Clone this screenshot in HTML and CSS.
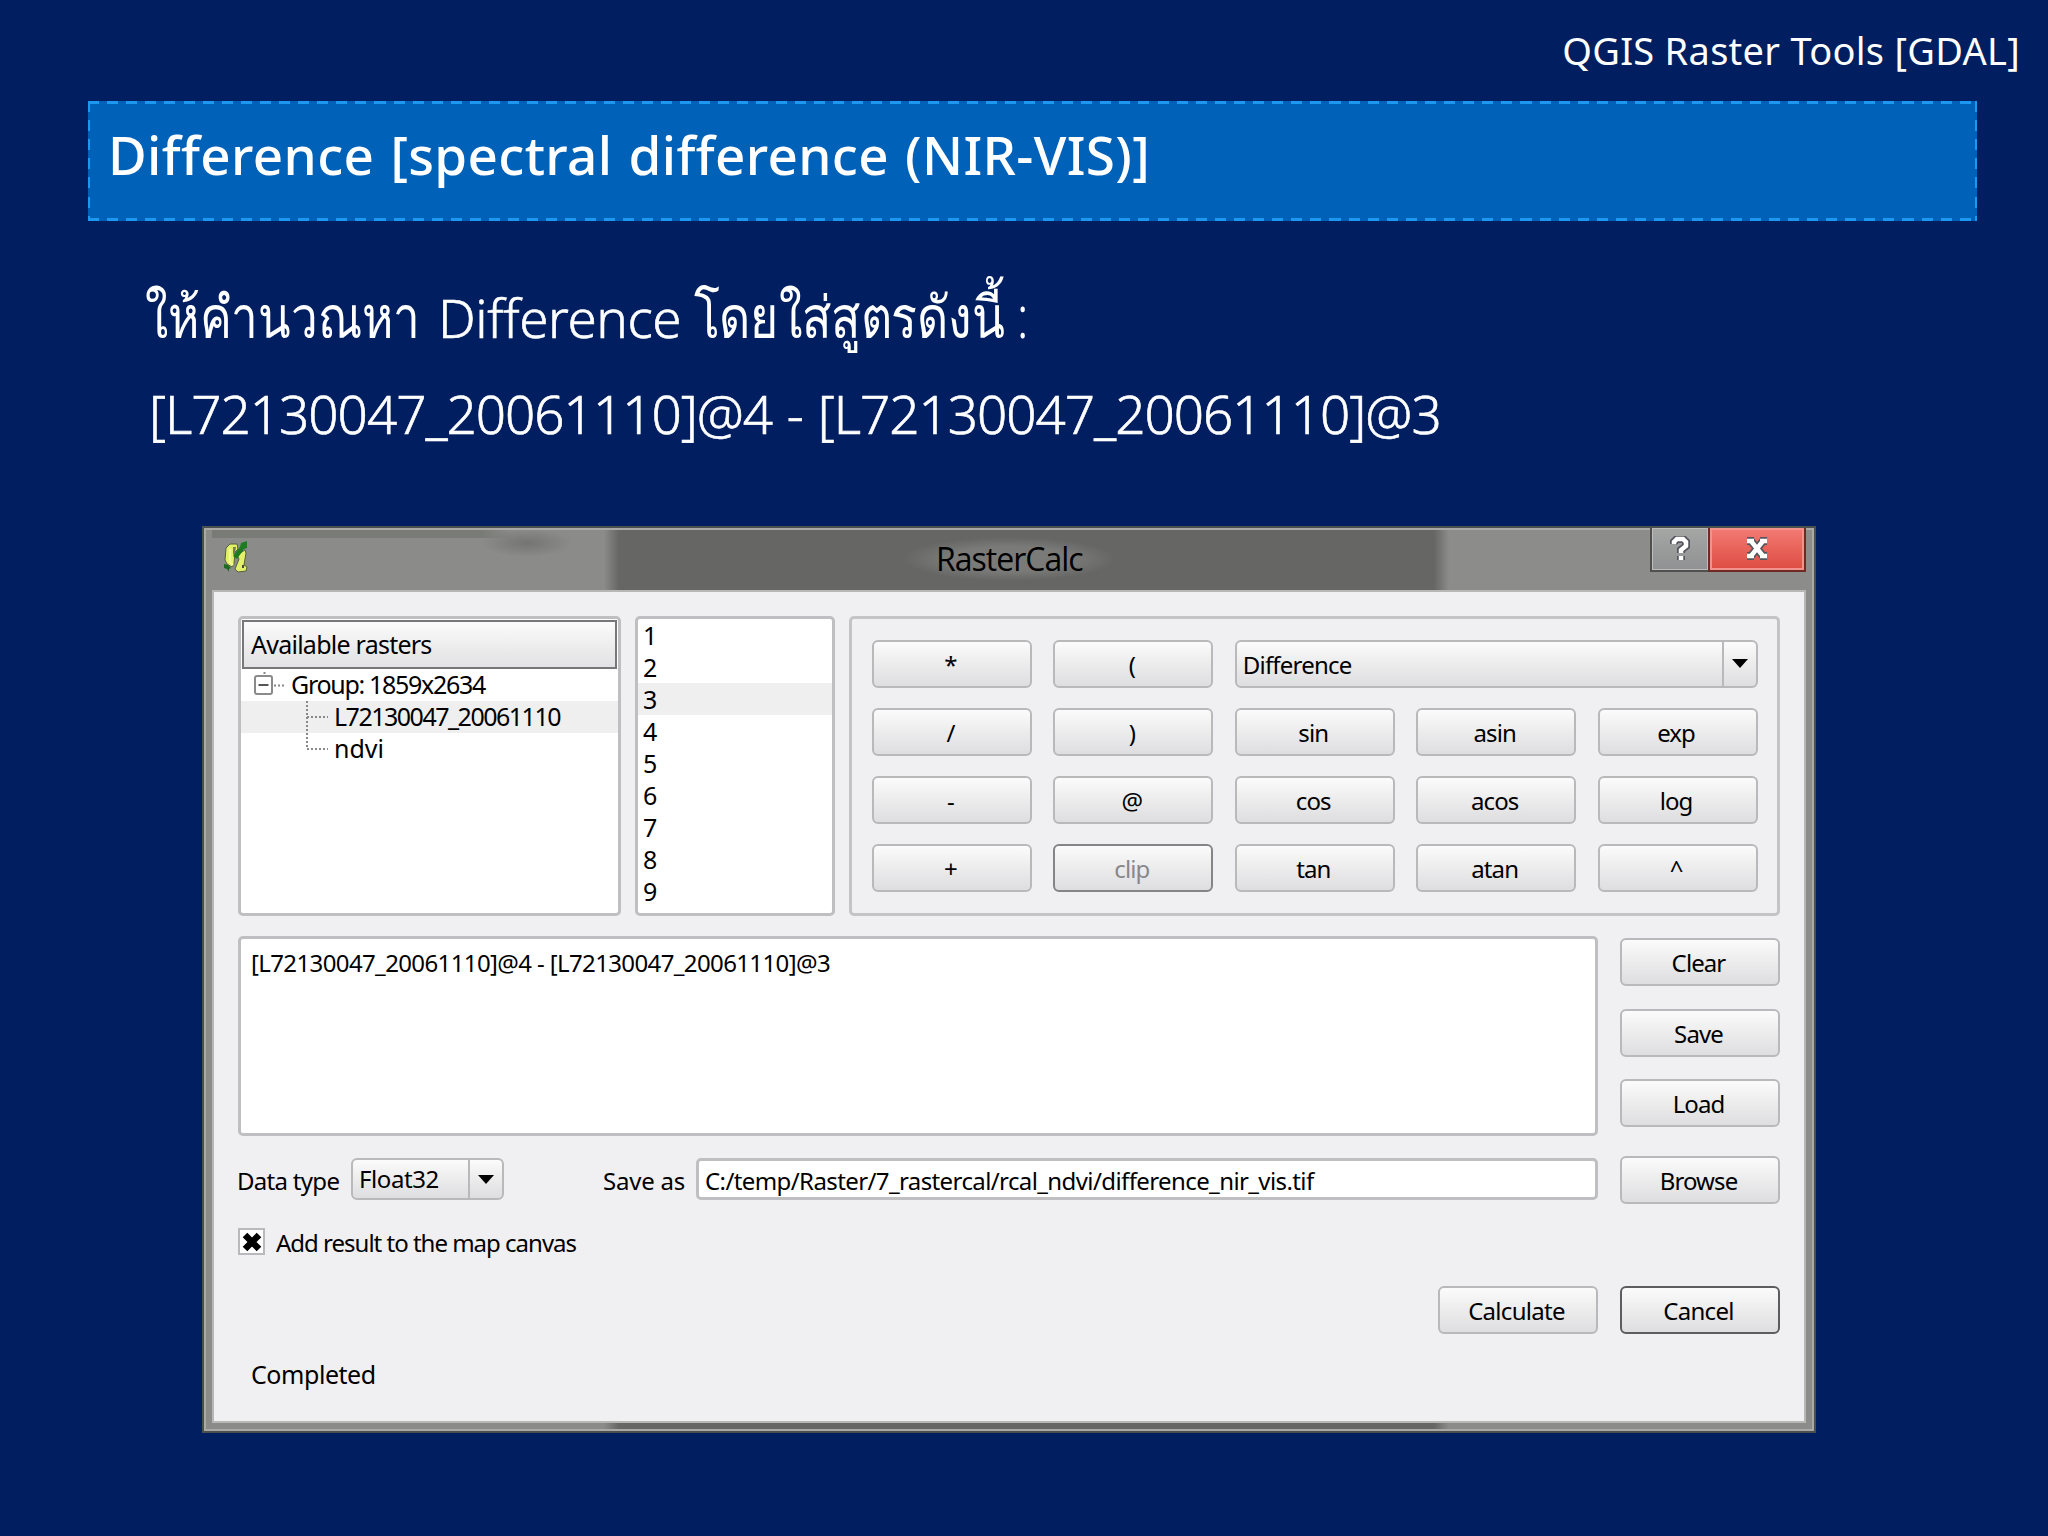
FILE: index.html
```html
<!DOCTYPE html>
<html lang="th">
<head>
    <meta charset="UTF-8">
    <title>QGIS Raster Tools [GDAL]</title>
    <link rel="stylesheet" href="styles.css">
</head>
<body>
    <div class="slide">
        <div class="topic"><span>QGIS Raster Tools [GDAL]</span></div>
        <h1 class="banner"><span>Difference [spectral difference (NIR-VIS)]</span></h1>

        <div class="text">
            <p><span class="thai first">ให้คำนวณหา</span><span class="word">Difference</span><span class="thai">โดยใส่สูตรดังนี้ :</span></p>
            <p><span class="bands-expr">[L72130047_20061110]@4 - [L72130047_20061110]@3</span></p>
        </div>

        <div class="window">
            <div class="titlebar">
                <svg class="logo" viewBox="0 0 24 32" width="24" height="32">
                    <path d="M2 7 6 3h7l1 5-3 3-1 12-2 3-5-3-2-4z" fill="#e3f06a" stroke="#55603a" stroke-width="1"/>
                    <path d="M9 6h3l-1 6-2 2z" fill="#77795a"/>
                    <path d="M6 8v13l3 3" fill="none" stroke="#f4f99b" stroke-width="2"/>
                    <path d="M13 14 21 9l1 3-2 12 3 2-1 4-8 1-3-3 4-10z" fill="#e3f06a" stroke="#55603a" stroke-width="1"/>
                    <path d="M18 24h2v3h-2z" fill="#444b3a"/>
                    <path d="M23 0v7l-3 1-7 10-4-3 7-9 1-4z" fill="#1d7c22"/>
                    <path d="M0 23l4 1 3 3-2 1v3l-2-3-3-1z" fill="#1d6b22"/>
                </svg>
                <div class="title"><span>RasterCalc</span></div>
                <div class="controls">
                    <div class="help">
                        <svg viewBox="0 0 20 26" width="20" height="26">
                            <path d="M4 8V6l3-3h6l3 3v4l-5 4v3M11 20v4" class="outline"/>
                            <path d="M4 8V6l3-3h6l3 3v4l-5 4v3M11 20v4" class="stroke"/>
                        </svg>
                    </div>
                    <div class="close">
                        <svg viewBox="0 0 26 24" width="26" height="24">
                            <path d="M7 4l12 15M19 4L7 19M3 4h7M16 4h7M3 19h7M16 19h7" class="outline"/>
                            <path d="M7 4l12 15M19 4L7 19M3 4h7M16 4h7M3 19h7M16 19h7" class="stroke"/>
                        </svg>
                    </div>
                </div>
            </div>

            <div class="content">
                <div class="top">
                    <div class="rasters">
                        <div class="head"><span>Available rasters</span></div>
                        <div class="node group">
                            <svg width="38" height="32"><path d="M11.500 3v3M21 16.500h10" class="dots"/><rect x="2" y="7" width="17" height="18" rx="2" fill="#fff" stroke="#8a8a8a" stroke-width="2"/><path d="M5.500 16h10" stroke="#555" stroke-width="2"/></svg><span>Group: 1859x2634</span>
                        </div>
                        <div class="node sel"><svg width="28" height="32"><path d="M1 0v32M1 16h21" class="dots"/></svg><span>L72130047_20061110</span></div>
                        <div class="node name"><svg width="28" height="32"><path d="M1 0v16h21" class="dots"/></svg><span>ndvi</span></div>
                    </div>
                    <div class="bands">
                        <div>1</div><div>2</div><div class="sel">3</div><div>4</div><div>5</div><div>6</div><div>7</div><div>8</div><div>9</div>
                    </div>
                    <div class="keys">
                        <div class="btn">*</div><div class="btn">(</div>
                        <div class="combo wide"><span>Difference</span><i></i></div>
                        <div class="btn">/</div><div class="btn">)</div><div class="btn">sin</div><div class="btn">asin</div><div class="btn">exp</div>
                        <div class="btn">-</div><div class="btn">@</div><div class="btn">cos</div><div class="btn">acos</div><div class="btn">log</div>
                        <div class="btn">+</div><div class="btn disabled">clip</div><div class="btn">tan</div><div class="btn">atan</div><div class="btn">^</div>
                    </div>
                </div>

                <div class="middle">
                    <div class="formula"><span>[L72130047_20061110]@4 - [L72130047_20061110]@3</span></div>
                    <div class="side">
                        <div class="btn">Clear</div>
                        <div class="btn">Save</div>
                        <div class="btn">Load</div>
                    </div>
                </div>

                <div class="output">
                    <span class="lbl">Data type</span>
                    <div class="combo type"><span>Float32</span><i></i></div>
                    <span class="lbl save">Save as</span>
                    <div class="path"><span>C:/temp/Raster/7_rastercal/rcal_ndvi/difference_nir_vis.tif</span></div>
                    <div class="btn">Browse</div>
                </div>

                <div class="add">
                    <div class="check"><svg viewBox="0 0 22 22" width="22" height="22"><path d="M4 4l14 14M18 4L4 18" stroke="#000" stroke-width="6.500"/></svg></div>
                    <span>Add result to the map canvas</span>
                </div>

                <div class="actions">
                    <div class="btn">Calculate</div>
                    <div class="btn default">Cancel</div>
                </div>

                <div class="status"><span>Completed</span></div>
            </div>
        </div>
    </div>
</body>
</html>
```
FILE: styles.css
```css
* {
    box-sizing: border-box;
}
body {
    margin: 0;
    background: #001e60;
    font-family: "Noto Sans", "Open Sans", sans-serif;
}
.slide {
    width: 2048px;
    height: 1536px;
    overflow: hidden;
    color: #fff;
}
.topic {
    height: 101px;
    padding: 23px 28px 0 0;
    text-align: right;
    font-size: 38px;
    line-height: 54px;
    letter-spacing: 0.28px;
    white-space: nowrap;
}
.banner {
    width: 1889px;
    height: 120px;
    margin: 0 0 0 88px;
    padding: 18px 0 0 20px;
    font-size: 53px;
    font-weight: 500;
    line-height: 72px;
    letter-spacing: 0.35px;
    word-spacing: 2px;
    background:
        repeating-linear-gradient(90deg, #1c98f0 0 11px, transparent 11px 19.1px) 0 0 / 100% 3px no-repeat,
        repeating-linear-gradient(90deg, #1c98f0 0 11px, transparent 11px 19.1px) 0 100% / 100% 3px no-repeat,
        repeating-linear-gradient(#1c98f0 0 11px, transparent 11px 19.1px) 0 0 / 2px 100% no-repeat,
        repeating-linear-gradient(#1c98f0 0 11px, transparent 11px 19.1px) 100% 0 / 2px 100% no-repeat,
        #0061b8;
}
.text {
    height: 305px;
    padding: 49px 0 0 146px;
    font-size: 53px;
    font-weight: 300;
    line-height: 96px;
}
.text p {
    display: flex;
    height: 96px;
    margin: 0;
    white-space: pre;
}
.thai {
    transform: scale(0.91, 1.1);
    transform-origin: 0 66px;
}
.first {
    width: 293px;
    margin-left: -1px;
    transform: scale(0.9, 1.1);
}
.word {
    width: 256px;
    letter-spacing: -0.4px;
}
.word, .bands-expr {
    -webkit-text-stroke: 0.6px #fff;
}
.bands-expr {
    padding-left: 3px;
    letter-spacing: -1px;
    word-spacing: 2px;
}
.window {
    width: 1614px;
    height: 907px;
    margin-left: 202px;
    padding: 0 8px 8px 8px;
    border: 2px solid #4a5050;
    color: #000;
    font-size: 24px;
    background: linear-gradient(90deg, #8b8c89 400px, #666765 415px 1230px, #8c8c8b 1245px);
    box-shadow: inset 0 0 0 2px #aaa9a5;
}
.titlebar {
    display: flex;
    height: 62px;
    padding-left: 12px;
    background:
        radial-gradient(ellipse 45px 14px at 315px 15px, #747572, transparent) no-repeat,
        linear-gradient(90deg, #797b77 270px, transparent 300px) 0 2px / 320px 8px no-repeat;
}
.logo {
    margin-top: 13px;
}
.title {
    flex: 1;
    padding-left: 688px;
    font-family: "Open Sans", sans-serif;
    font-size: 32px;
    line-height: 62px;
    letter-spacing: -1px;
}
.title span {
    display: inline-block;
    margin-left: -34px;
    padding: 0 34px;
    background: radial-gradient(ellipse at center, #7a7b79 40%, transparent 70%) center / 100% 44px no-repeat;
}
.controls {
    display: flex;
    height: 44px;
}
.help, .close {
    display: flex;
    align-items: center;
    justify-content: center;
    border: 2px solid #50504f;
    border-top: 0;
}
.help {
    width: 58px;
    border-right: 0;
    background: linear-gradient(#a5a7a5, #8f9192);
    box-shadow: inset 0 0 0 1px #bcbcbc;
}
.close {
    width: 98px;
    border-color: #6e2b25;
    background: linear-gradient(#f37b74, #de4b41);
    box-shadow: inset 0 0 0 2px #f3928a;
}
.outline {
    fill: none;
    stroke: #55555c;
    stroke-width: 8;
}
.stroke {
    fill: none;
    stroke: #fff;
    stroke-width: 4.5;
}
.content {
    height: 833px;
    padding: 24px 24px 0 24px;
    border: 2px solid #b7b7b6;
    background: #f0eff1;
}
.top {
    display: flex;
    height: 300px;
    gap: 14px;
}
.rasters, .bands, .formula, .path {
    border: 3px solid #bfbfc1;
    border-radius: 5px;
    background: #fff;
}
.rasters {
    width: 383px;
}
.head {
    height: 49px;
    margin: 1px 1px 0;
    padding-left: 7px;
    border: 2px solid #77777a;
    background: linear-gradient(#fbfbfb, #e2e1e3);
    font-size: 25px;
    line-height: 45px;
    letter-spacing: -0.75px;
}
.node {
    display: flex;
    height: 32px;
    padding-left: 65px;
    font-size: 25px;
    line-height: 31px;
    letter-spacing: -1.5px;
}
.node.group {
    padding-left: 12px;
    letter-spacing: -1.3px;
}
.node.name {
    letter-spacing: 0;
}
.dots {
    fill: none;
    stroke: #888;
    stroke-width: 2;
    stroke-dasharray: 2 2;
}
.sel {
    background: #efeff0;
}
.bands {
    width: 200px;
    font-size: 25px;
    line-height: 32px;
}
.bands div {
    padding-left: 5px;
}
.keys {
    display: grid;
    flex: 1;
    grid-template-columns: repeat(5, 160px);
    grid-auto-rows: 48px;
    gap: 20.200px 21.400px;
    padding: 20.500px 0 0 20px;
    border: 3px solid #c4c4c6;
    border-radius: 5px;
}
.btn, .combo {
    height: 48px;
    border: 2px solid #b9b9bb;
    border-radius: 6px;
    background: linear-gradient(#fbfbfb, #dedddf);
    line-height: 45px;
}
.btn {
    width: 160px;
    padding-right: 3px;
    text-align: center;
    letter-spacing: -0.9px;
}
.disabled {
    border-color: #858587;
    color: #88888b;
}
.default {
    border-color: #5d5d60;
}
.combo {
    display: flex;
    padding-left: 6px;
    justify-content: space-between;
    letter-spacing: -0.8px;
}
.combo i {
    display: flex;
    width: 34px;
    border-left: 2px solid #b9b9bb;
    align-items: center;
    justify-content: center;
}
.combo i::after {
    content: "";
    border: 8px solid transparent;
    border-top: 9px solid #000;
    border-bottom: 0;
}
.wide {
    grid-column: span 3;
}
.middle {
    display: flex;
    height: 200px;
    margin-top: 20px;
    gap: 22px;
}
.formula {
    flex: 1;
    padding: 7px 10px;
    line-height: 34px;
    letter-spacing: -0.62px;
}
.side {
    display: flex;
    flex-direction: column;
    gap: 22.500px;
    padding-top: 2px;
}
.output {
    display: flex;
    height: 48px;
    margin-top: 20px;
}
.lbl {
    width: 113px;
    margin-left: -1px;
    line-height: 50px;
    letter-spacing: -0.7px;
    white-space: nowrap;
}
.type {
    width: 153px;
    height: 42px;
    margin: 2px 0 0 1px;
    line-height: 38px;
    letter-spacing: -0.4px;
}
.save {
    width: 93px;
    margin-left: 99px;
    letter-spacing: -0.2px;
}
.path {
    flex: 1;
    height: 42px;
    margin: 2px 22px 0 0;
    padding-left: 6px;
    line-height: 39px;
    letter-spacing: -0.6px;
}
.add {
    display: flex;
    height: 28px;
    margin-top: 24px;
    gap: 11px;
    line-height: 30px;
    letter-spacing: -1px;
}
.check {
    display: flex;
    width: 27px;
    height: 27px;
    align-items: center;
    justify-content: center;
    border: 2px solid #b9b9bb;
    background: #fff;
}
.actions {
    display: flex;
    margin-top: 30px;
    gap: 22px;
    justify-content: flex-end;
}
.actions .btn {
    letter-spacing: -0.7px;
}
.status {
    padding: 23px 0 0 13px;
    font-size: 25px;
    line-height: 34px;
    letter-spacing: -0.45px;
}
```
